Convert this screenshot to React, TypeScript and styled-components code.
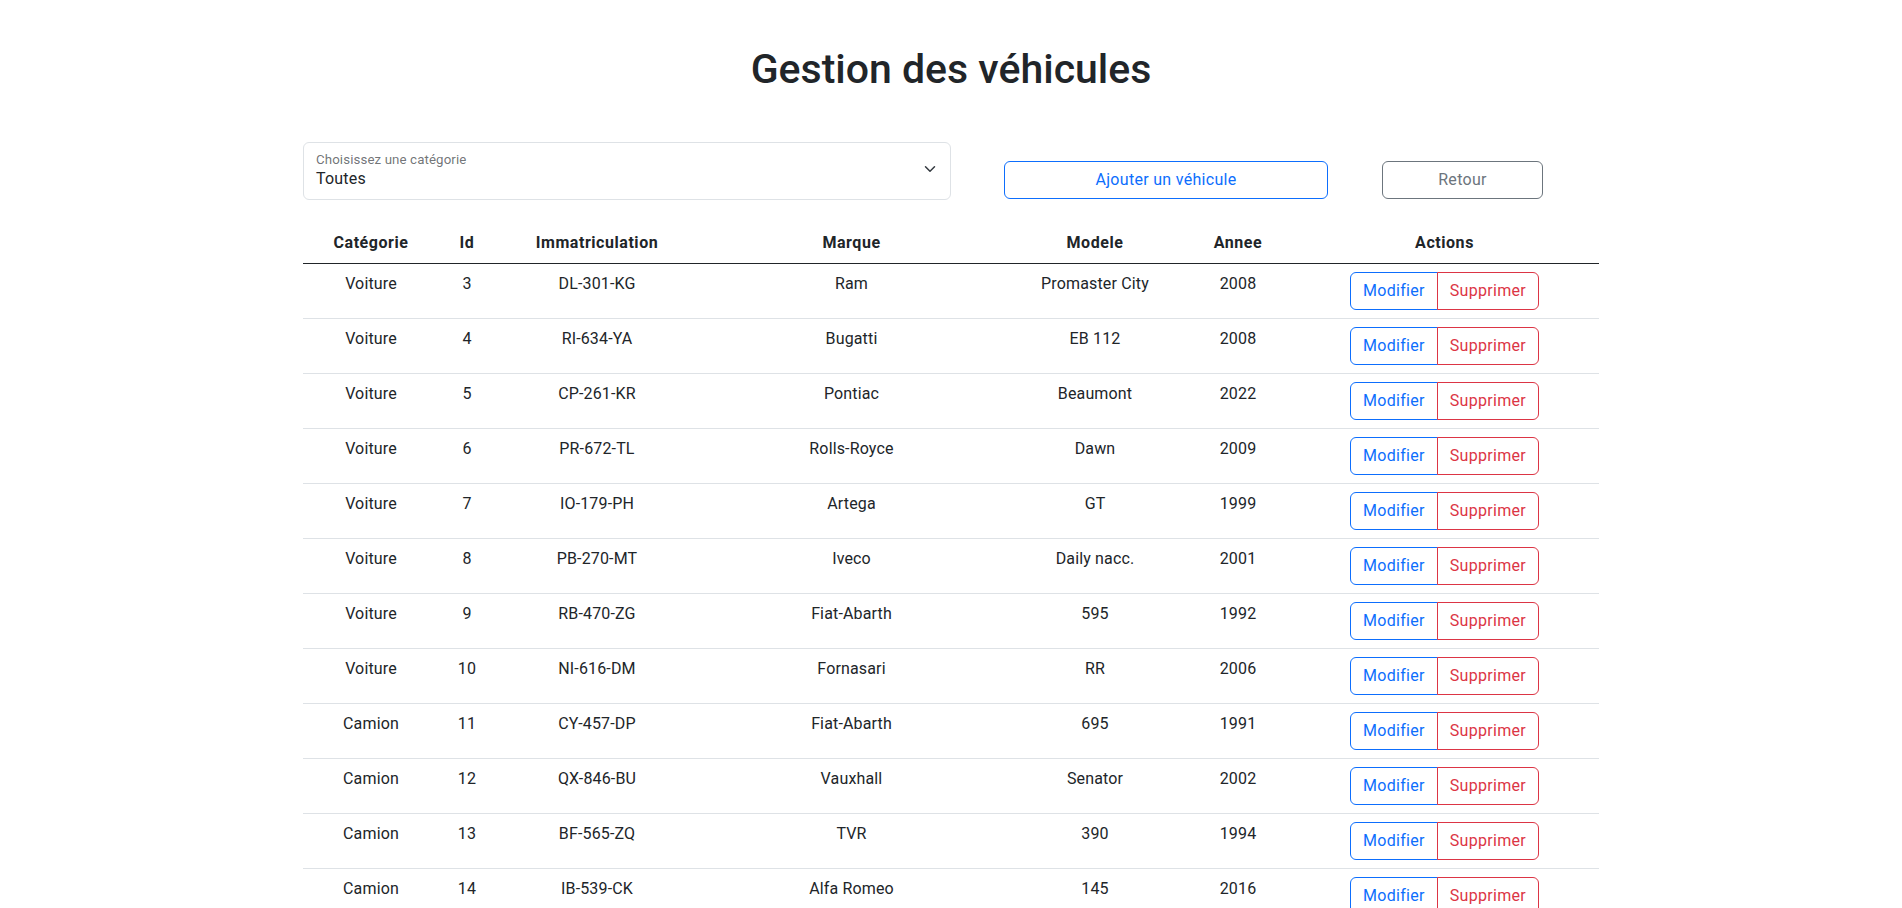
import React from "react";
import styled, { createGlobalStyle } from "styled-components";

const Global = createGlobalStyle`
  html { scrollbar-width: none; }
  html::-webkit-scrollbar { display: none; }
  body {
    margin: 0;
    font-family: Roboto, "Noto Sans", "DejaVu Sans", sans-serif;
    font-size: 16px;
    line-height: 1.5;
    color: #212529;
    background: #fff;
  }
  * { box-sizing: border-box; }
`;

const Container = styled.div`
  width: 1320px;
  margin: 0 auto;
  padding: 45px 12px 0;
`;

const Title = styled.h1`
  margin: 0;
  font-size: 41px;
  font-weight: 500;
  line-height: 48px;
  text-align: center;
`;

const Toolbar = styled.div`
  display: flex;
  align-items: flex-end;
  margin-top: 49px;
`;

const SelectBox = styled.div`
  width: 648px;
  height: 58px;
  border: 1px solid #dee2e6;
  border-radius: 6px;
  display: flex;
  align-items: center;
  padding: 0 12px 0 12px;
`;

const SelectText = styled.div`
  flex: 1;
  align-self: flex-start;
  display: flex;
  flex-direction: column;
  padding-top: 9px;
`;

const FloatLabel = styled.span`
  font-size: 13.3px;
  line-height: 16px;
  color: rgba(33, 37, 41, 0.65);
  letter-spacing: 0.1px;
`;

const SelectValue = styled.span`
  font-size: 16px;
  line-height: 24px;
  margin-top: -1px;
  letter-spacing: 0.2px;
`;

const Chevron = styled.svg`
  width: 16px;
  height: 12px;
  margin-top: -4px;
`;

const OutlineButton = styled.button<{ $color: string; $width: number; $gap: number }>`
  width: ${(p) => p.$width}px;
  margin-left: ${(p) => p.$gap}px;
  margin-bottom: 1px;
  height: 38px;
  border: 1px solid ${(p) => p.$color};
  color: ${(p) => p.$color};
  background: transparent;
  border-radius: 6px;
  font-family: inherit;
  font-size: 16px;
  line-height: 24px;
  letter-spacing: 0.3px;
  padding: 6px 12px;
`;

const Table = styled.table`
  width: 1296px;
  margin-top: 23px;
  border-collapse: collapse;
  table-layout: fixed;
  text-align: center;
  vertical-align: top;
`;

const HeadCell = styled.th`
  padding: 8px;
  font-weight: 700;
  line-height: 24px;
  letter-spacing: 0.55px;
  border-bottom: 1px solid #212529;
`;

const Row = styled.tr`
  border-bottom: 1px solid #dee2e6;
`;

const Cell = styled.td`
  padding: 8px;
  line-height: 24px;
  letter-spacing: 0.15px;
  vertical-align: top;
`;

const Group = styled.div`
  display: inline-flex;
`;

const RowButton = styled.button<{ $color: string; $first?: boolean }>`
  height: 38px;
  padding: 6px 12px;
  border: 1px solid ${(p) => p.$color};
  color: ${(p) => p.$color};
  background: transparent;
  font-family: inherit;
  font-size: 16px;
  line-height: 24px;
  letter-spacing: 0.3px;
  border-radius: ${(p) => (p.$first ? "6px 0 0 6px" : "0 6px 6px 0")};
  margin-left: ${(p) => (p.$first ? "0" : "-1px")};
`;

const cols = [136, 56, 204, 305, 182, 104, 309];
const headers = ["Catégorie", "Id", "Immatriculation", "Marque", "Modele", "Annee", "Actions"];

const rows: [string, number, string, string, string, number][] = [
  ["Voiture", 3, "DL-301-KG", "Ram", "Promaster City", 2008],
  ["Voiture", 4, "RI-634-YA", "Bugatti", "EB 112", 2008],
  ["Voiture", 5, "CP-261-KR", "Pontiac", "Beaumont", 2022],
  ["Voiture", 6, "PR-672-TL", "Rolls-Royce", "Dawn", 2009],
  ["Voiture", 7, "IO-179-PH", "Artega", "GT", 1999],
  ["Voiture", 8, "PB-270-MT", "Iveco", "Daily nacc.", 2001],
  ["Voiture", 9, "RB-470-ZG", "Fiat-Abarth", "595", 1992],
  ["Voiture", 10, "NI-616-DM", "Fornasari", "RR", 2006],
  ["Camion", 11, "CY-457-DP", "Fiat-Abarth", "695", 1991],
  ["Camion", 12, "QX-846-BU", "Vauxhall", "Senator", 2002],
  ["Camion", 13, "BF-565-ZQ", "TVR", "390", 1994],
  ["Camion", 14, "IB-539-CK", "Alfa Romeo", "145", 2016],
];

export default function App() {
  return (
    <>
      <Global />
      <Container>
        <Title>Gestion des véhicules</Title>
        <Toolbar>
          <SelectBox>
            <SelectText>
              <FloatLabel>Choisissez une catégorie</FloatLabel>
              <SelectValue>Toutes</SelectValue>
            </SelectText>
            <Chevron viewBox="0 0 16 16">
              <path d="m2 5 6 6 6-6" fill="none" stroke="#343a40" strokeWidth="2" strokeLinecap="round" strokeLinejoin="round" />
            </Chevron>
          </SelectBox>
          <OutlineButton $color="#0d6efd" $width={324} $gap={53}>Ajouter un véhicule</OutlineButton>
          <OutlineButton $color="#6c757d" $width={161} $gap={54}>Retour</OutlineButton>
        </Toolbar>
        <Table>
          <colgroup>
            {cols.map((w, i) => (
              <col key={i} style={{ width: w }} />
            ))}
          </colgroup>
          <thead>
            <tr>
              {headers.map((h) => (
                <HeadCell key={h}>{h}</HeadCell>
              ))}
            </tr>
          </thead>
          <tbody>
            {rows.map((r) => (
              <Row key={r[1]}>
                <Cell>{r[0]}</Cell>
                <Cell>{r[1]}</Cell>
                <Cell>{r[2]}</Cell>
                <Cell>{r[3]}</Cell>
                <Cell>{r[4]}</Cell>
                <Cell>{r[5]}</Cell>
                <Cell>
                  <Group>
                    <RowButton $color="#0d6efd" $first>Modifier</RowButton>
                    <RowButton $color="#dc3545">Supprimer</RowButton>
                  </Group>
                </Cell>
              </Row>
            ))}
          </tbody>
        </Table>
      </Container>
    </>
  );
}
